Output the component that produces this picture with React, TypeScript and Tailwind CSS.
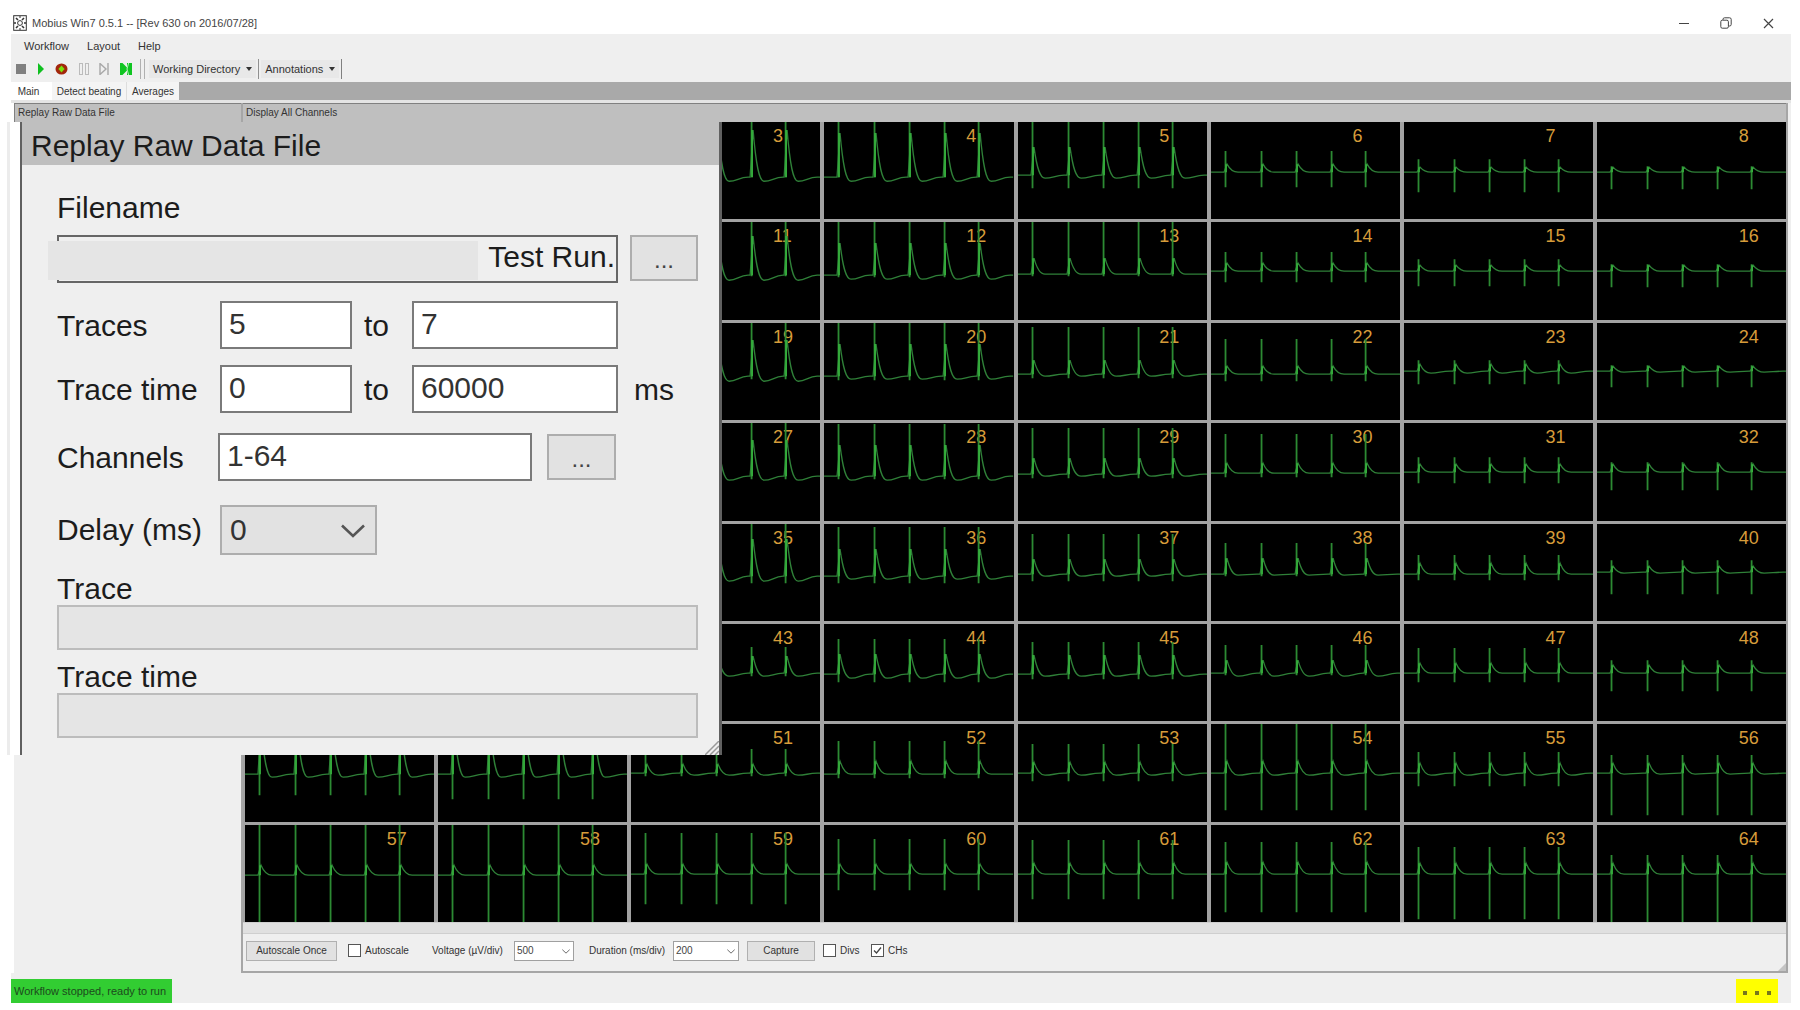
import React, { useState } from 'react';

// [spike top, spike bottom, wave peak, baseline, dip after the wave], in a 189 x 97 cell
type Beat = [number, number, number, number, number];

const CELL_W = 189;
const CELL_H = 97;
const BEAT_X = [14, 50, 85, 120, 154];

const CHANNELS: Beat[][] = [
  [[0, 55, 8, 55, 59], [0, 55, 8, 55, 59], [0, 55, 8, 55, 59], [0, 55, 11, 55, 59], [0, 66, 25, 53, 56], [29, 65, 42, 50, 50], [37, 70, 45, 50, 50], [44, 67, 45, 50, 50]],
  [[0, 54, 14, 53, 58], [0, 54, 14, 53, 58], [0, 54, 14, 53, 58], [0, 55, 21, 53, 57], [0, 54, 36, 52, 52], [30, 60, 41, 49, 49], [37, 64, 43, 49, 49], [42, 65, 43, 49, 49]],
  [[0, 56, 17, 53, 58], [0, 56, 17, 53, 58], [0, 56, 17, 53, 58], [0, 57, 21, 53, 56], [4, 55, 37, 51, 53], [16, 58, 43, 51, 51], [37, 61, 41, 48, 50], [42, 64, 43, 48, 49]],
  [[0, 56, 17, 53, 57], [0, 56, 17, 53, 57], [0, 56, 17, 53, 57], [1, 56, 22, 53, 57], [5, 55, 35, 51, 53], [11, 54, 40, 50, 50], [34, 60, 41, 49, 49], [39, 67, 41, 49, 49]],
  [[0, 59, 15, 52, 57], [0, 59, 15, 52, 57], [0, 59, 15, 52, 57], [3, 59, 25, 52, 55], [10, 57, 35, 50, 52], [19, 52, 34, 50, 51], [31, 56, 39, 50, 50], [36, 70, 42, 48, 49]],
  [[23, 52, 32, 49, 52], [23, 52, 32, 49, 52], [23, 52, 32, 49, 52], [15, 58, 30, 50, 54], [18, 55, 31, 50, 52], [21, 51, 36, 49, 52], [24, 58, 39, 49, 49], [36, 67, 41, 49, 49]],
  [[0, 71, 0, 50, 53], [0, 75, 0, 50, 53], [25, 52, 40, 49, 51], [17, 54, 37, 50, 50], [20, 57, 38, 49, 51], [0, 86, 37, 49, 51], [28, 62, 39, 49, 51], [31, 91, 39, 49, 50]],
  [[0, 97, 40, 50, 50], [0, 97, 40, 50, 50], [8, 79, 39, 49, 49], [14, 65, 39, 49, 49], [15, 74, 38, 49, 49], [17, 87, 37, 49, 49], [22, 94, 38, 49, 49], [30, 97, 38, 49, 49]],
];

function tracePath([, , peak, base, dip]: Beat) {
  let d = `M0 ${base}`;
  for (const x of BEAT_X) {
    d += ` L${x - 1} ${base} L${x + 2} ${peak} C${x + 5} ${peak + (dip - peak) * 0.7} ${x + 8} ${dip} ${x + 13} ${dip}`;
    d += ` C${x + 21} ${dip} ${x + 23} ${base} ${x + 32} ${base}`;
  }
  return `${d} L${CELL_W} ${base}`;
}

function spikePath([top, bottom]: Beat) {
  return BEAT_X.map((x) => `M${x + 0.5} ${top}V${bottom}`).join(' ');
}

function ChannelCell({ id, beat }: { id: number; beat: Beat }) {
  const [, , peak, base] = beat;
  return (
    <div className="relative min-h-0 min-w-0 overflow-hidden bg-black">
      <span className="absolute top-1 left-3/4 text-lg leading-5 text-[#d69c3a]">{id}</span>
      <svg
        className="absolute inset-0 h-full w-full"
        viewBox={`0 0 ${CELL_W} ${CELL_H}`}
        preserveAspectRatio="none"
        fill="none"
        aria-hidden="true"
      >
        <path d={tracePath(beat)} stroke="#2f8038" strokeWidth="1.3" />
        <path d={spikePath(beat)} stroke="#2c8a33" strokeWidth="1.8" />
        <path d={BEAT_X.map((x) => `M${x + 1} ${peak}V${base}`).join(' ')} stroke="#35ad3c" strokeWidth="1.8" />
      </svg>
    </div>
  );
}

function Chevron({ className }: { className: string }) {
  return (
    <svg className={className} viewBox="0 0 24 14" fill="none" aria-hidden="true">
      <path d="M1 1.5L12 12L23 1.5" stroke="#555" strokeWidth="2.6" />
    </svg>
  );
}

function TitleBar() {
  return (
    <header className="flex h-[34px] items-center pt-3">
      <svg className="ml-px h-4 w-4" viewBox="0 0 14 16" fill="none" stroke="#333" aria-hidden="true">
        <rect x="0.7" y="0.7" width="12.6" height="14.6" />
        <path d="M3 3l2 2M11 3L9 5M3 13l2-2M11 13l-2-2M1 8h2M11 8h2" strokeWidth="1.6" />
        <circle cx="7" cy="8" r="2.4" />
        <path d="M7 1v2M7 13v2" />
      </svg>
      <h1 className="ml-1 flex-1 text-[11px] text-[#444]">Mobius Win7 0.5.1 -- [Rev 630 on 2016/07/28]</h1>
      <div className="mr-0.5 flex items-center">
        <button aria-label="Minimize" className="flex w-[42px] justify-center">
          <svg width="10" height="10" viewBox="0 0 10 10" stroke="#444"><path d="M0 5.5h10" /></svg>
        </button>
        <button aria-label="Restore" className="flex w-[42px] justify-center">
          <svg width="12" height="12" viewBox="0 0 12 12" fill="none" stroke="#444">
            <rect x="0.8" y="3.2" width="7.6" height="8" rx="1.5" />
            <path d="M3 3V2.4Q3 0.8 4.6 0.8H9.6Q11.2 0.8 11.2 2.4V7.4Q11.2 9 9.6 9H8.6" />
          </svg>
        </button>
        <button aria-label="Close" className="flex w-[42px] justify-center">
          <svg width="11" height="11" viewBox="0 0 11 11" stroke="#444" strokeWidth="1.2"><path d="M1 1l9 9M10 1l-9 9" /></svg>
        </button>
      </div>
    </header>
  );
}

function ToolBar() {
  return (
    <div className="flex h-[26px] items-center bg-[#efefef] pl-[5px] text-[11px] text-[#333]">
      <div className="flex w-[124px] items-center justify-between pr-2">
        <button aria-label="Stop">
          <svg width="10" height="10"><rect width="10" height="10" fill="#808080" /></svg>
        </button>
        <button aria-label="Play">
          <svg width="8" height="12"><path d="M1 0L7 6L1 12z" fill="#0fc01f" /></svg>
        </button>
        <button aria-label="Record">
          <svg width="13" height="12" viewBox="0 0 13 12">
            <ellipse cx="6.5" cy="6" rx="6" ry="5.6" fill="#a3260c" />
            <path d="M6.5 2.4L9.6 6L6.5 9.6L3.4 6z" fill="#7be00c" />
          </svg>
        </button>
        <button aria-label="Pause">
          <svg width="10" height="12" fill="none" stroke="#bbb"><rect x="0.5" y="0.5" width="3" height="11" /><rect x="6.5" y="0.5" width="3" height="11" /></svg>
        </button>
        <button aria-label="Step">
          <svg width="10" height="12" fill="none" stroke="#a8a8a8"><path d="M1 0.5v11L7 6zM9 0v12" strokeWidth="1.4" /></svg>
        </button>
        <button aria-label="Skip to end">
          <svg width="12" height="12"><path d="M0 0h2.5l4.5 4.5V0h5v12H7V7.5L2.5 12H0z" fill="#10c522" /><path d="M8.6 0L7 6l1.6 6" stroke="#b9f0bd" fill="none" /></svg>
        </button>
      </div>
      <div className="h-5 w-[5px] border-x border-[#b0b0b0]" />
      <button className="ml-1 flex h-[18px] items-center gap-1.5 bg-[#e8e8e8] px-1">
        Working Directory
        <svg width="6" height="4"><path d="M0 0h6L3 4z" fill="#333" /></svg>
      </button>
      <div className="ml-0.5 h-5 w-px bg-[#909090]" />
      <button className="ml-0.5 flex h-[18px] items-center gap-1.5 bg-[#e8e8e8] px-1">
        Annotations
        <svg width="6" height="4"><path d="M0 0h6L3 4z" fill="#333" /></svg>
      </button>
      <div className="ml-0.5 h-5 w-px bg-[#808080]" />
    </div>
  );
}

const fieldClass = 'h-12 border-2 border-[#7a7a7a] bg-white pb-0.5 pl-[7px] text-[#333] outline-none';
const browseClass = 'h-[46px] border-2 border-[#adadad] bg-[#e2e2e2] pt-1 text-2xl leading-6 text-[#444]';

function ReplayPanel() {
  const [from, setFrom] = useState('5');
  const [to, setTo] = useState('7');
  const [timeFrom, setTimeFrom] = useState('0');
  const [timeTo, setTimeTo] = useState('60000');
  const [channels, setChannels] = useState('1-64');

  return (
    <section className="absolute top-[19px] -left-[7px] z-10 border-l-[3px] border-[#ececec] bg-white pl-[10px]">
      <div className="relative w-[702px] border-r-[3px] border-l-2 border-[#606060] bg-[#efefef] text-[30px] leading-8 text-[#1c1c1c]">
        <h2 className="flex h-[43px] items-center bg-[#bfbfbf] pt-1 pl-[9px]">Replay Raw Data File</h2>
        <form className="flex flex-col pt-[27px] pr-[21px] pb-[17px] pl-[35px]" onSubmit={(e) => e.preventDefault()}>
          <label htmlFor="filename">Filename</label>
          <div className="mt-[11px] flex">
            <div className="relative w-[561px]">
              <input
                id="filename"
                readOnly
                value="Test Run."
                className="h-12 w-full border-2 border-[#666] bg-[#efefef] pr-px pb-1 text-right outline-none"
              />
              <div className="absolute top-1.5 -left-[9px] h-[39px] w-[430px] bg-[#e5e5e5]" />
            </div>
            <button className={`${browseClass} ml-3 w-[68px]`}>...</button>
          </div>

          <div className="mt-[18px] flex items-center">
            <label htmlFor="trace-from" className="w-[163px] pt-0.5">Traces</label>
            <input id="trace-from" value={from} onChange={(e) => setFrom(e.target.value)} className={`${fieldClass} w-[132px]`} />
            <label htmlFor="trace-to" className="w-[60px] pt-0.5 pl-3">to</label>
            <input id="trace-to" value={to} onChange={(e) => setTo(e.target.value)} className={`${fieldClass} w-[206px]`} />
          </div>

          <div className="mt-4 flex items-center">
            <label htmlFor="time-from" className="w-[163px] pt-0.5">Trace time</label>
            <input id="time-from" value={timeFrom} onChange={(e) => setTimeFrom(e.target.value)} className={`${fieldClass} w-[132px]`} />
            <label htmlFor="time-to" className="w-[60px] pt-0.5 pl-3">to</label>
            <input id="time-to" value={timeTo} onChange={(e) => setTimeTo(e.target.value)} className={`${fieldClass} w-[206px]`} />
            <span className="ml-4 pt-0.5">ms</span>
          </div>

          <div className="mt-5 flex items-center">
            <label htmlFor="channels" className="w-[161px] pt-0.5">Channels</label>
            <input id="channels" value={channels} onChange={(e) => setChannels(e.target.value)} className={`${fieldClass} w-[314px]`} />
            <button className={`${browseClass} ml-[15px] w-[69px]`}>...</button>
          </div>

          <div className="mt-6 flex items-center">
            <label htmlFor="delay" className="w-[163px]">Delay (ms)</label>
            <div className="relative">
              <select id="delay" className="h-[50px] w-[157px] appearance-none border-2 border-[#adadad] bg-[#e2e2e2] pl-2 text-[#333]">
                <option>0</option>
              </select>
              <Chevron className="pointer-events-none absolute top-[19px] right-3 h-[14px] w-6" />
            </div>
          </div>

          <label htmlFor="trace-progress" className="mt-[18px]">Trace</label>
          <output id="trace-progress" className="block h-[45px] border-2 border-[#bcbcbc] bg-[#e5e5e5]" />
          <label htmlFor="time-progress" className="mt-[11px]">Trace time</label>
          <output id="time-progress" className="block h-[45px] border-2 border-[#bcbcbc] bg-[#e5e5e5]" />
        </form>
        <svg className="absolute right-0 bottom-0 h-[14px] w-[14px]" viewBox="0 0 14 14" stroke="#999" aria-hidden="true">
          <path d="M0 14L14 0M5 14L14 5M10 14L14 10" strokeWidth="1.5" />
        </svg>
      </div>
    </section>
  );
}

const smallSelect = 'h-5 w-full appearance-none border border-[#a0a0a0] bg-white pl-0.5 text-[#444]';
const checkboxClass = 'h-[13px] w-[13px] appearance-none border border-[#555] bg-white';

function DisplayControls() {
  const [chs, setChs] = useState(true);
  return (
    <div className="relative flex h-[37px] items-center bg-[#efefef] pb-1 pl-[3px] text-[10px] text-[#333]">
      <button className="h-5 w-[91px] border border-[#b0b0b0] bg-[#e1e1e1]">Autoscale Once</button>
      <label className="ml-[11px] flex w-[84px] items-center gap-1">
        <input type="checkbox" className={checkboxClass} />
        Autoscale
      </label>
      <label htmlFor="voltage" className="w-[82px]">Voltage (µV/div)</label>
      <div className="relative w-[60px]">
        <select id="voltage" className={smallSelect}><option>500</option></select>
        <Chevron className="pointer-events-none absolute top-2 right-1 h-[5px] w-2" />
      </div>
      <label htmlFor="duration" className="ml-[15px] w-[84px]">Duration (ms/div)</label>
      <div className="relative w-[66px]">
        <select id="duration" className={smallSelect}><option>200</option></select>
        <Chevron className="pointer-events-none absolute top-2 right-1 h-[5px] w-2" />
      </div>
      <button className="ml-2 h-5 w-[68px] border border-[#b0b0b0] bg-[#e1e1e1]">Capture</button>
      <label className="ml-2 flex w-12 items-center gap-1">
        <input type="checkbox" className={checkboxClass} />
        Divs
      </label>
      <label className="relative flex items-center gap-1">
        <input type="checkbox" checked={chs} onChange={() => setChs(!chs)} className={checkboxClass} />
        {chs && (
          <svg className="pointer-events-none absolute left-0.5 h-[9px] w-[9px]" viewBox="0 0 9 9" fill="none" stroke="#444">
            <path d="M1 4.5L3.5 7L8 1.5" strokeWidth="1.3" />
          </svg>
        )}
        CHs
      </label>
      <svg className="absolute right-0 bottom-0 h-2 w-2" viewBox="0 0 8 8" aria-hidden="true">
        <path d="M8 0V8H0z" fill="#c4c4c4" />
      </svg>
    </div>
  );
}

export default function App() {
  return (
    <div className="flex h-screen flex-col overflow-hidden bg-white pr-[9px] pb-[7px] pl-[11px] font-['Liberation_Sans',Arial,sans-serif]">
      <TitleBar />
      <nav className="flex h-[22px] items-center gap-[18px] bg-[#efefef] pt-0.5 pl-[13px] text-[11px] text-[#333]">
        <button>Workflow</button>
        <button>Layout</button>
        <button>Help</button>
      </nav>
      <ToolBar />
      <div className="flex h-[18px] bg-[#a9a9a9] text-[10px] text-[#333]" role="tablist">
        <button role="tab" aria-selected="true" className="w-[41px] bg-white pr-1.5 text-center">Main</button>
        <button role="tab" aria-selected="false" className="w-[75px] border-r border-[#ddd] bg-[#f4f4f4]">Detect beating</button>
        <button role="tab" aria-selected="false" className="w-[52px] bg-[#f4f4f4]">Averages</button>
      </div>

      <main className="flex min-h-0 flex-1 border-t-[3px] border-[#e4e4e4] bg-[#efefef] pr-[3px]">
        <div className="w-[3px] bg-white" />
        <aside className="relative w-[227px]">
          <div className="h-[19px] border-t border-l border-[#808080] bg-[#bfbfbf] pl-[3px] text-[10px] leading-[18px] text-[#333]">
            Replay Raw Data File
          </div>
          <ReplayPanel />
        </aside>
        <section className="flex min-w-0 flex-1 flex-col border-r-2 border-b-2 border-l-2 border-[#a6a6a6]">
          <h2 className="h-[19px] border-t border-[#808080] bg-[#bfbfbf] pl-[3px] text-[10px] leading-[18px] text-[#333]">
            Display All Channels
          </h2>
          <div className="grid min-h-0 flex-1 grid-cols-8 grid-rows-8 gap-x-1 gap-y-[3px] bg-[#a2a2a2] pl-0.5">
            {CHANNELS.flat().map((beat, i) => (
              <ChannelCell key={i} id={i + 1} beat={beat} />
            ))}
          </div>
          <div className="h-3 border-t border-b border-[#cfcfcf] bg-[#e0e0e0]" />
          <DisplayControls />
        </section>
      </main>

      <footer className="flex h-[30px] items-end justify-between bg-[#efefef] pr-[13px] text-[11px]">
        <p className="flex h-6 w-[161px] items-center bg-[#32cd32] pl-[3px] text-[#1d4a1d]">Workflow stopped, ready to run</p>
        <div className="flex h-6 w-[42px] items-center justify-center gap-2 bg-[#ffff00] pt-1">
          <i className="h-1 w-1 bg-[#77771c]" />
          <i className="h-1 w-1 bg-[#77771c]" />
          <i className="h-1 w-1 bg-[#77771c]" />
        </div>
      </footer>
    </div>
  );
}
